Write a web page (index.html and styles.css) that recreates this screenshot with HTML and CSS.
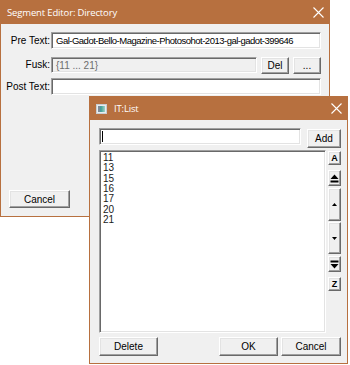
FILE: index.html
```html
<!DOCTYPE html>
<html lang="en">
<head>
    <meta charset="UTF-8">
    <title>Segment Editor</title>
    <link rel="stylesheet" href="styles.css">
</head>
<body>
    <div class="desk">
        <div class="window seg-win">
            <div class="titlebar">
                <span class="title-text">Segment Editor: Directory</span>
                <span class="close">
                    <svg width="11" height="11" viewBox="0 0 11 11"><path d="M0.5 0.5 L10.5 10.5 M10.5 0.5 L0.5 10.5" stroke="#fff" stroke-width="1.1"/></svg>
                </span>
            </div>
            <div class="seg-body">
                <div class="row row-pre">
                    <label class="label">Pre Text:</label>
                    <div class="field tight">Gal-Gadot-Bello-Magazine-Photosohot-2013-gal-gadot-399646</div>
                </div>
                <div class="row row-fusk">
                    <label class="label">Fusk:</label>
                    <div class="field disabled">{11 ... 21}</div>
                    <button class="btn btn-sm">Del</button>
                    <button class="btn btn-sm">...</button>
                </div>
                <div class="row row-post">
                    <label class="label">Post Text:</label>
                    <div class="field"></div>
                </div>
                <div class="seg-foot">
                    <button class="btn btn-cancel">Cancel</button>
                </div>
            </div>
        </div>

        <div class="window list-win">
            <div class="titlebar">
                <span class="app-icon">
                    <svg width="11" height="10" viewBox="0 0 11 10">
                        <defs>
                            <linearGradient id="ig" x1="0" y1="0" x2="1" y2="0">
                                <stop offset="0" stop-color="#3d7fb0"/>
                                <stop offset="0.5" stop-color="#4fa89a"/>
                                <stop offset="1" stop-color="#9fd3c8"/>
                            </linearGradient>
                        </defs>
                        <rect x="0.5" y="0.5" width="10" height="9" fill="#e8ecef" stroke="#c9ced2"/>
                        <rect x="2" y="2" width="7" height="6" fill="url(#ig)"/>
                        <rect x="2" y="2" width="2" height="6" fill="#7d8a96"/>
                    </svg>
                </span>
                <span class="title-text">IT:List</span>
                <span class="close">
                    <svg width="11" height="11" viewBox="0 0 11 11"><path d="M0.5 0.5 L10.5 10.5 M10.5 0.5 L0.5 10.5" stroke="#fff" stroke-width="1.1"/></svg>
                </span>
            </div>
            <div class="list-body">
                <div class="add-row">
                    <div class="field entry"><span class="caret"></span></div>
                    <button class="btn btn-add">Add</button>
                </div>
                <div class="list-row">
                    <div class="listbox">
                        <div>11</div>
                        <div>13</div>
                        <div>15</div>
                        <div>16</div>
                        <div>17</div>
                        <div>20</div>
                        <div>21</div>
                    </div>
                    <div class="side">
                        <button class="btn side-btn s-a">A</button>
                        <button class="btn side-btn s-top">
                            <svg width="9" height="9" viewBox="0 0 9 9"><path d="M4.5 0.5 L8.5 5 L0.5 5 Z" fill="#000"/><rect x="0.5" y="6.5" width="8" height="2" fill="#000"/></svg>
                        </button>
                        <button class="btn side-btn s-up">
                            <svg width="5" height="3" viewBox="0 0 5 3"><path d="M2.5 0 L5 3 L0 3 Z" fill="#000"/></svg>
                        </button>
                        <button class="btn side-btn s-down">
                            <svg width="5" height="3" viewBox="0 0 5 3"><path d="M0 0 L5 0 L2.5 3 Z" fill="#000"/></svg>
                        </button>
                        <button class="btn side-btn s-bottom">
                            <svg width="9" height="9" viewBox="0 0 9 9"><rect x="0.5" y="0.5" width="8" height="2" fill="#000"/><path d="M0.5 4 L8.5 4 L4.5 8.5 Z" fill="#000"/></svg>
                        </button>
                        <button class="btn side-btn s-z">Z</button>
                    </div>
                </div>
                <div class="foot-row">
                    <button class="btn btn-wide">Delete</button>
                    <div class="spacer"></div>
                    <button class="btn btn-wide">OK</button>
                    <button class="btn btn-wide">Cancel</button>
                </div>
            </div>
        </div>
    </div>
</body>
</html>
```

FILE: styles.css
```css
body {
    margin: 0;
    background: #fff;
    font-family: 'Liberation Sans', Arial, sans-serif;
    font-size: 10px;
    color: #000;
}
.desk {
    position: relative;
    width: 350px;
    height: 365px;
    overflow: hidden;
}
.window {
    position: absolute;
    box-sizing: border-box;
    border: 1px solid #b7703f;
    background: #f0f0f0;
    display: flex;
    flex-direction: column;
}
.seg-win {
    left: 0;
    top: 0;
    width: 330px;
    height: 217px;
}
.list-win {
    left: 89px;
    top: 96px;
    width: 259px;
    height: 268px;
}
.titlebar {
    height: 23px;
    background: #b7703f;
    color: #fff;
    display: flex;
    align-items: center;
    padding-left: 6px;
    font-family: 'Open Sans', sans-serif;
    font-size: 9.5px;
    letter-spacing: -0.15px;
}
.title-text {
    flex: 1;
    white-space: nowrap;
}
.close {
    width: 11px;
    height: 11px;
    margin-right: 5px;
    display: flex;
}
.close svg {
    display: block;
}
.app-icon {
    display: flex;
    margin: 0 7px 0 0;
}

/* sunken field */
.field {
    box-sizing: border-box;
    height: 17px;
    background: #fff;
    border: 1px solid;
    border-color: #a0a0a0 #fff #fff #a0a0a0;
    box-shadow: inset 1px 1px #696969, inset -1px -1px #e3e3e3;
    padding: 2px 0 0 4px;
    white-space: nowrap;
    overflow: hidden;
    line-height: 12px;
}
.field.tight {
    font-size: 9.5px;
    letter-spacing: -0.5px;
}
.field.disabled {
    background: #f0f0f0;
    color: #6d6d6d;
    height: 16px;
}

/* raised button */
.btn {
    box-sizing: border-box;
    background: #f0f0f0;
    border: 1px solid;
    border-color: #fff #696969 #696969 #fff;
    box-shadow: inset -1px -1px #a0a0a0, inset 1px 1px #e3e3e3;
    font-family: inherit;
    font-size: 10px;
    color: #000;
    padding: 0;
    margin: 0;
    display: flex;
    align-items: center;
    justify-content: center;
}

/* segment editor */
.seg-body {
    flex: 1;
    padding: 8px 8px 0 0;
}
.row {
    display: flex;
    align-items: flex-start;
}
.label {
    width: 49px;
    margin-right: 1px;
    text-align: right;
    line-height: 17px;
    white-space: nowrap;
}
.row .field {
    flex: 1;
}
.row-pre {
    margin-bottom: 8px;
}
.row-fusk {
    margin-bottom: 4px;
}
.row-fusk .label {
    line-height: 16px;
}
.btn-sm {
    width: 28px;
    height: 17px;
    margin-left: 4px;
}
.seg-foot {
    margin-top: 95px;
    padding-left: 8px;
}
.btn-cancel {
    width: 61px;
    height: 18px;
}

/* list editor */
.list-body {
    flex: 1;
    padding: 8px 6px 7px 9px;
    display: flex;
    flex-direction: column;
}
.add-row {
    display: flex;
    align-items: flex-start;
    height: 20px;
}
.entry {
    flex: 1;
    margin-right: 6px;
    padding: 2px 0 0 2px;
}
.caret {
    display: block;
    width: 1px;
    height: 11px;
    background: #000;
}
.btn-add {
    width: 34px;
    height: 19px;
    margin-top: 1px;
}
.list-row {
    display: flex;
    margin-top: 2px;
    height: 183px;
}
.listbox {
    flex: 1;
    box-sizing: border-box;
    background: #fff;
    border: 1px solid;
    border-color: #a0a0a0 #fff #fff #a0a0a0;
    box-shadow: inset 1px 1px #696969, inset -1px -1px #e3e3e3;
    padding: 2px 0 0 3px;
    line-height: 10.35px;
    color: #1a1a1a;
}
.side {
    width: 13px;
    margin-left: 2px;
    display: flex;
    flex-direction: column;
    padding-top: 1px;
}
.side-btn {
    width: 13px;
    font-weight: bold;
    font-size: 9px;
}
.s-a { height: 14px; }
.s-top { height: 16px; margin-top: 5px; }
.s-up { height: 33px; margin-top: 2px; }
.s-down { height: 32px; margin-top: 1px; }
.s-bottom { height: 16px; margin-top: 2px; }
.s-z { height: 14px; margin-top: 5px; }
.foot-row {
    display: flex;
    margin-top: 4px;
}
.spacer {
    flex: 1;
}
.btn-wide {
    height: 19px;
    width: 59px;
}
.btn-wide + .btn-wide {
    width: 60px;
    margin-left: 3px;
}
```
